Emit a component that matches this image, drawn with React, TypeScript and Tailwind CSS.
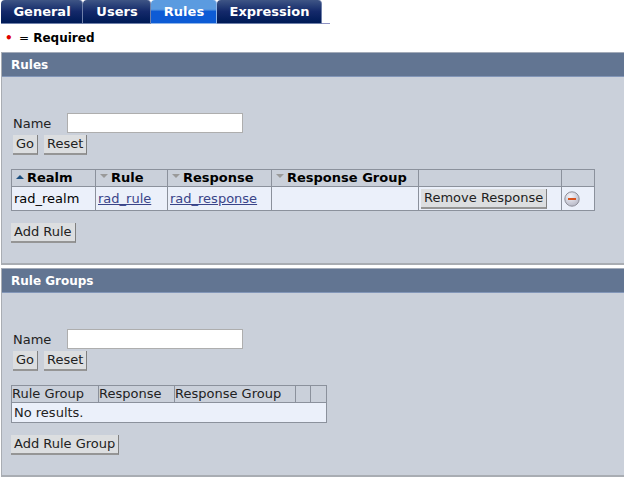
import React from "react";

const tabs = [
  { label: "General", width: "w-[82px]" },
  { label: "Users", width: "w-[68px]" },
  { label: "Rules", width: "w-[66px]", active: true },
  { label: "Expression", width: "w-[105px]" },
];

const ruleColumns = [
  { label: "Realm", width: "w-[84px]", sorted: true },
  { label: "Rule", width: "w-[72px]" },
  { label: "Response", width: "w-[104px]" },
  { label: "Response Group", width: "w-[147px]" },
];

function SortIcon({ sorted }: { sorted?: boolean }) {
  return (
    <svg width="8" height="12" viewBox="0 0 8 12" className="shrink-0">
      {sorted ? (
        <path d="M0 9L4 5L8 9Z" fill="#1d4f80" />
      ) : (
        <path d="M0 4H8L4 8Z" fill="#9a9a9a" />
      )}
    </svg>
  );
}

function RemoveIcon() {
  return (
    <svg width="16" height="16" viewBox="0 0 16 16" className="block">
      <defs>
        <radialGradient id="knob" cx="0.4" cy="0.3" r="0.75">
          <stop offset="0" stopColor="#f4f4fa" />
          <stop offset="1" stopColor="#b4b6c4" />
        </radialGradient>
      </defs>
      <circle cx="8" cy="8" r="7.2" fill="url(#knob)" stroke="#8e8f99" />
      <rect x="4" y="7" width="8" height="2" fill="#d8531e" />
    </svg>
  );
}

function Button({ children }: { children: React.ReactNode }) {
  return (
    <button
      type="button"
      className="h-5 whitespace-nowrap border-r border-b-2 border-r-[#808080] border-b-[#959595] bg-[#dcdee0] px-[3px] text-[13px] leading-[18px] text-[#222]"
    >
      {children}
    </button>
  );
}

function Panel({ title, children }: { title: string; children: React.ReactNode }) {
  return (
    <section className="ml-px border-b-2 border-l border-[#a9adb3] bg-[#cad0da]">
      <h2 className="h-[25px] border-t border-b border-t-[#a3abb9] border-b-[#8296b8] bg-[#627592] pl-[9px] text-xs leading-6 font-bold text-white">
        {title}
      </h2>
      <div className="px-[9px] pt-9 pb-5">{children}</div>
    </section>
  );
}

function Search({ id }: { id: string }) {
  return (
    <form className="pl-0.5" onSubmit={(e) => e.preventDefault()}>
      <div className="flex items-center">
        <label htmlFor={id} className="w-[54px] pt-0.5">
          Name
        </label>
        <input id={id} type="text" className="h-5 w-44 border border-[#aeaeae] bg-white px-1 outline-none" />
      </div>
      <div className="mt-0.5 flex gap-1.5">
        <Button>Go</Button>
        <Button>Reset</Button>
      </div>
    </form>
  );
}

export default function App() {
  return (
    <main className="bg-white font-['Verdana','DejaVu_Sans',sans-serif] text-[13px] leading-4 text-[#222]">
      <nav className="flex pl-px">
        {tabs.map((tab) => (
          <a
            key={tab.label}
            href="#"
            className={`h-6 rounded-t-[4px] border-r border-b pl-px text-center text-[13px] leading-6 font-bold text-white ${tab.width} ${
              tab.active
                ? "border-[#8eb4e8] bg-linear-to-b from-[#5b9be0] from-40% to-[#0d5bd5] to-50%"
                : "border-[#6f80aa] bg-linear-to-b from-[#3f5585] via-[#14296a] via-50% to-[#001a56]"
            }`}
          >
            {tab.label}
          </a>
        ))}
        <div className="w-2 border-b border-[#8f93c4]" />
      </nav>
      <p className="flex h-7 items-center pl-[5px] text-xs font-bold text-black">
        <span className="w-[14px] text-[#e00000]">•</span>
        <span><span className="font-normal">=</span> Required</span>
      </p>

      <Panel title="Rules">
        <Search id="rule-name" />
        <table className="mt-[14px] w-[584px] table-fixed border-collapse border border-[#8b919c] bg-[#ebf0fa]">
          <thead>
            <tr className="h-[17px] bg-[#cad0da] text-left text-[13px] text-black">
              {ruleColumns.map((col) => (
                <th key={col.label} className={`border border-[#8b919c] p-0 ${col.width}`}>
                  <span className="flex h-4 gap-[3px] pl-1 leading-4 whitespace-nowrap">
                    <SortIcon sorted={col.sorted} />
                    {col.label}
                  </span>
                </th>
              ))}
              <th className="w-[143px] border border-[#8b919c]" />
              <th className="border border-[#8b919c]" />
            </tr>
          </thead>
          <tbody>
            <tr className="h-6">
              <td className="border border-[#8b919c] px-0.5 py-0 text-black">rad_realm</td>
              <td className="border border-[#8b919c] px-0.5 py-0">
                <a href="#" className="text-[#394489] underline">rad_rule</a>
              </td>
              <td className="border border-[#8b919c] px-0.5 py-0">
                <a href="#" className="text-[#394489] underline">rad_response</a>
              </td>
              <td className="border border-[#8b919c]" />
              <td className="border border-[#8b919c] px-0.5 py-0">
                <div className="flex"><Button>Remove Response</Button></div>
              </td>
              <td className="border border-[#8b919c] px-0.5 py-0">
                <button type="button" aria-label="Remove rule" className="block">
                  <RemoveIcon />
                </button>
              </td>
            </tr>
          </tbody>
        </table>
        <div className="mt-3 flex">
          <Button>Add Rule</Button>
        </div>
      </Panel>

      <div className="h-[3px]" />

      <Panel title="Rule Groups">
        <Search id="group-name" />
        <table className="mt-[14px] w-[316px] table-fixed border-collapse border border-[#8b919c] bg-[#ebf0fa]">
          <thead>
            <tr className="h-[17px] bg-[#cad0da] text-left whitespace-nowrap">
              <th className="w-[87px] border border-[#8b919c] p-0 font-normal">Rule Group</th>
              <th className="w-[76px] border border-[#8b919c] p-0 font-normal">Response</th>
              <th className="w-[121px] border border-[#8b919c] p-0 font-normal">Response Group</th>
              <th className="w-[15px] border border-[#8b919c] p-0" />
              <th className="border border-[#8b919c] p-0" />
            </tr>
          </thead>
          <tbody>
            <tr className="h-5">
              <td colSpan={5} className="border border-[#8b919c] px-0.5 py-0">No results.</td>
            </tr>
          </tbody>
        </table>
        <div className="mt-3 flex">
          <Button>Add Rule Group</Button>
        </div>
      </Panel>
    </main>
  );
}
